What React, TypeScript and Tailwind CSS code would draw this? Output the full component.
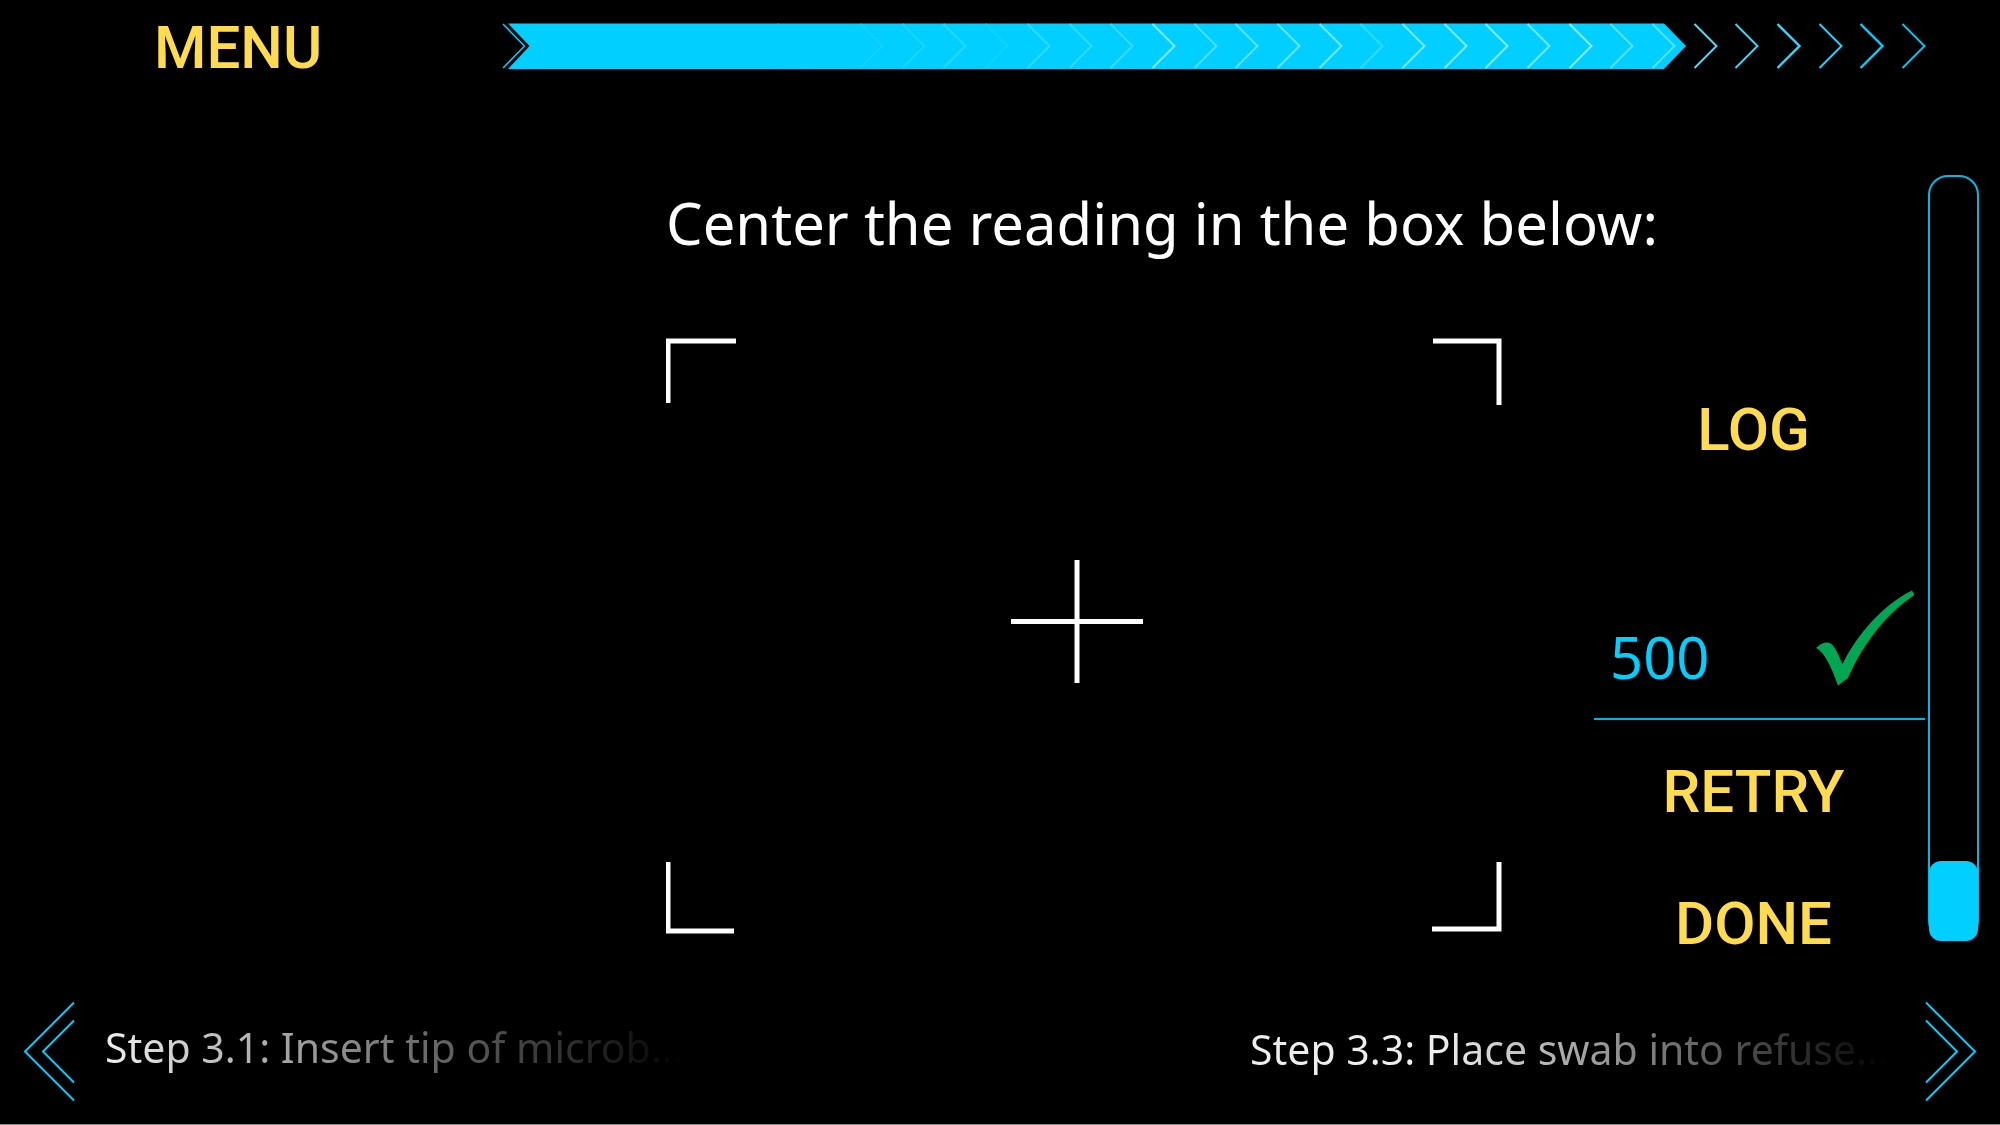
import React from "react";

const CYAN = "#00cfff";

type Chevron = { x: number; color: string; width: number };

const chevrons: Chevron[] = [
  { x: 278, color: "#06d0ff", width: 2 },
  { x: 361, color: "#12d3ff", width: 2 },
  { x: 403, color: "#18d4ff", width: 2 },
  { x: 444, color: "#26d7ff", width: 2 },
  { x: 486, color: "#0ed2ff", width: 2 },
  { x: 528, color: "#30d9ff", width: 2 },
  { x: 570, color: "#30d9ff", width: 2 },
  { x: 611, color: "#38daff", width: 2 },
  { x: 653, color: "#80e7ff", width: 2 },
  { x: 695, color: "#4cdeff", width: 2 },
  { x: 736, color: "#5ce1ff", width: 2 },
  { x: 778, color: "#68e3ff", width: 2 },
  { x: 820, color: "#74e5ff", width: 2 },
  { x: 861, color: "#34d9ff", width: 2 },
  { x: 903, color: "#7ce6ff", width: 2 },
  { x: 945, color: "#84e8ff", width: 2 },
  { x: 986, color: "#84e8ff", width: 2 },
  { x: 1028, color: "#74e5ff", width: 2 },
  { x: 1070, color: "#8ce9ff", width: 2 },
  { x: 1111, color: "#58e0ff", width: 2 },
  { x: 1153, color: "#58e0ff", width: 2 },
  { x: 1195, color: "#50d8f8", width: 2 },
  { x: 1236, color: "#3cd6fb", width: 2 },
  { x: 1278, color: "#30d7ff", width: 2.4 },
  { x: 1320, color: "#1cd4ff", width: 2 },
  { x: 1361, color: "#06d0ff", width: 2.4 },
  { x: 1403, color: "#00c4f2", width: 2 },
];

function StepProgress() {
  return (
    <svg
      className="h-[50px] min-w-0 flex-1"
      viewBox="0 0 1426 50"
      preserveAspectRatio="xMinYMid meet"
      fill="none"
      role="progressbar"
      aria-label="Procedure progress"
      aria-valuenow={83}
      aria-valuemin={0}
      aria-valuemax={100}
    >
      <path d="M3 1 L24.5 23 L3 45" stroke={CYAN} strokeWidth="1.5" />
      <path d="M8 0.5 H1164 L1186 23 L1164 46 H8 L29.5 23 Z" fill={CYAN} />
      {chevrons.map((c) => (
        <path
          key={c.x}
          d={`M${c.x - 0.5} 1 l22 22 l-22 22`}
          stroke={c.color}
          strokeWidth={c.width}
        />
      ))}
    </svg>
  );
}

function Viewfinder() {
  return (
    <svg
      className="h-auto w-full"
      viewBox="0 0 836 596"
      fill="none"
      stroke="#fff"
      strokeWidth="5"
      role="img"
      aria-label="Camera target"
    >
      <path d="M70 3 H2 V65" />
      <path d="M767 3 H833 V67" />
      <path d="M68 593 H2 V524" />
      <path d="M766 591 H833 V524" />
      <path d="M345 283.5 H477" />
      <path d="M411 222 V345" />
    </svg>
  );
}

function CheckMark() {
  return (
    <svg className="h-24 w-[98px]" viewBox="0 0 98 96" role="img" aria-label="Accepted">
      <path
        d="M0 58 C4 54 7.5 52.5 11 52.5 C17 52.5 20 59 26.5 74 C42 43 67 15 96 0.5 L98.5 5 C72 23 49 50 32 88 L22 95.5 C14 73 7 61 0 58 Z"
        fill="#00a651"
      />
    </svg>
  );
}

function DoubleArrow({ back = false }: { back?: boolean }) {
  return (
    <svg
      className={back ? "h-[99px] w-[52px] -scale-x-100" : "h-[99px] w-[52px]"}
      viewBox="0 0 52 99"
      fill="none"
      stroke={CYAN}
      strokeWidth="2"
      aria-hidden="true"
    >
      <path d="M1 0.5 L50 49.5 L1 98.5" />
      <path d="M1 18.5 L32 49.5 L1 80.5" />
    </svg>
  );
}

function ActionButton({ children, className = "" }: { children: React.ReactNode; className?: string }) {
  return (
    <button
      type="button"
      className={`font-['Roboto',sans-serif] text-[60px] leading-[64px] font-medium text-[#ffdb4d] ${className}`}
    >
      {children}
    </button>
  );
}

export default function App() {
  return (
    <div className="flex min-h-screen flex-col border-b border-[#888] bg-black font-['Noto_Sans','Open_Sans',sans-serif] text-white">
      <header className="flex items-center pt-4 pr-[74px]">
        <nav className="w-[25vw] shrink-0 pl-[154px]">
          <ActionButton>MENU</ActionButton>
        </nav>
        <StepProgress />
      </header>

      <main className="flex pt-[95px] pr-[21px]">
        <div className="min-w-0 flex-1 pt-2 pl-[33.3vw]">
          <h1 className="text-[58px] leading-[80px] whitespace-nowrap">
            Center the reading in the box below:
          </h1>
          <div className="mt-[75px] flex gap-[92px]">
            <div className="min-w-0 flex-1">
              <Viewfinder />
            </div>
            <aside className="mr-[3px] flex w-[331px] shrink-0 flex-col pt-[60px]">
              <ActionButton className="self-center pr-3">LOG</ActionButton>
              <div className="mt-32 flex h-[130px] items-start justify-between border-b-2 border-[#00b4de] pr-[11px] pl-4">
                <output className="pt-[27px] text-[58px] leading-[80px] text-[#00cfff]">500</output>
                <CheckMark />
              </div>
              <ActionButton className="mt-10 self-center pr-3">RETRY</ActionButton>
              <ActionButton className="mt-[68px] self-center pr-3">DONE</ActionButton>
            </aside>
          </div>
        </div>
        <div
          className="mb-[15px] flex w-[51px] shrink-0 flex-col justify-end rounded-[20px] border-2 border-[#00b9e5]"
          role="meter"
          aria-label="Level"
          aria-valuenow={10}
          aria-valuemin={0}
          aria-valuemax={100}
        >
          <div className="-mx-px -mb-0.5 h-20 rounded-xl bg-[#00cfff]" />
        </div>
      </main>

      <footer className="mt-auto flex items-center justify-between px-[23px] pb-[23px]">
        <a href="#step-3-1" className="flex items-center gap-[30px]">
          <DoubleArrow back />
          <span className="bg-linear-to-r from-[#eee] to-transparent bg-clip-text pb-2.5 text-[41px] leading-[60px] text-transparent">
            Step 3.1: Insert tip of microb...
          </span>
        </a>
        <a href="#step-3-3" className="flex items-center gap-9">
          <span className="bg-linear-to-r from-[#eee] from-30% to-transparent bg-clip-text pb-1.5 text-[41px] leading-[60px] text-transparent">
            Step 3.3: Place swab into refuse...
          </span>
          <DoubleArrow />
        </a>
      </footer>
    </div>
  );
}
